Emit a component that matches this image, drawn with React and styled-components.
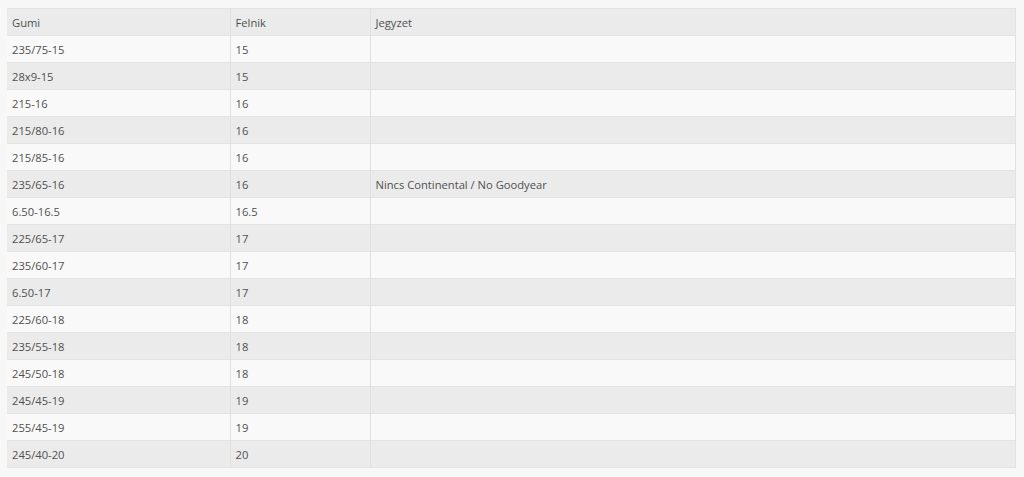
import styled, { createGlobalStyle } from 'styled-components';

const GlobalStyle = createGlobalStyle`
  html, body {
    margin: 0;
    padding: 0;
    background: #f7f7f7;
  }
`;

const Page = styled.div`
  padding: 8px 8px 8px 7px;
  font-family: 'Open Sans', 'Liberation Sans', sans-serif;
`;

const Table = styled.table`
  width: 100%;
  border-collapse: collapse;
  table-layout: fixed;
  border-right: 1px solid #e2e2e2;
  border-bottom: 1px solid #e2e2e2;
`;

const Row = styled.tr`
  background: ${(p) => (p.$odd ? '#f9f9f9' : '#ebebeb')};
  height: 27px;
`;

const Cell = styled.td`
  font-size: 11.2px;
  color: #505050;
  padding: 0 5px;
  border-top: 1px solid #e4e4e4;
  border-left: ${(p) => (p.$first ? 'none' : '1px solid #e0e0e0')};
  vertical-align: middle;
  box-sizing: border-box;
  white-space: nowrap;
`;

const rows = [
  ['235/75-15', '15', ''],
  ['28x9-15', '15', ''],
  ['215-16', '16', ''],
  ['215/80-16', '16', ''],
  ['215/85-16', '16', ''],
  ['235/65-16', '16', 'Nincs Continental / No Goodyear'],
  ['6.50-16.5', '16.5', ''],
  ['225/65-17', '17', ''],
  ['235/60-17', '17', ''],
  ['6.50-17', '17', ''],
  ['225/60-18', '18', ''],
  ['235/55-18', '18', ''],
  ['245/50-18', '18', ''],
  ['245/45-19', '19', ''],
  ['255/45-19', '19', ''],
  ['245/40-20', '20', ''],
];

const App = () => {
  return (
    <Page>
      <GlobalStyle />
      <Table>
        <colgroup>
          <col style={{ width: '223px' }} />
          <col style={{ width: '140px' }} />
          <col />
        </colgroup>
        <tbody>
          <Row>
            <Cell $first>Gumi</Cell>
            <Cell>Felnik</Cell>
            <Cell>Jegyzet</Cell>
          </Row>
          {rows.map((r, i) => (
            <Row key={i} $odd={i % 2 === 0}>
              <Cell $first>{r[0]}</Cell>
              <Cell>{r[1]}</Cell>
              <Cell>{r[2]}</Cell>
            </Row>
          ))}
        </tbody>
      </Table>
    </Page>
  );
};

export default App;
